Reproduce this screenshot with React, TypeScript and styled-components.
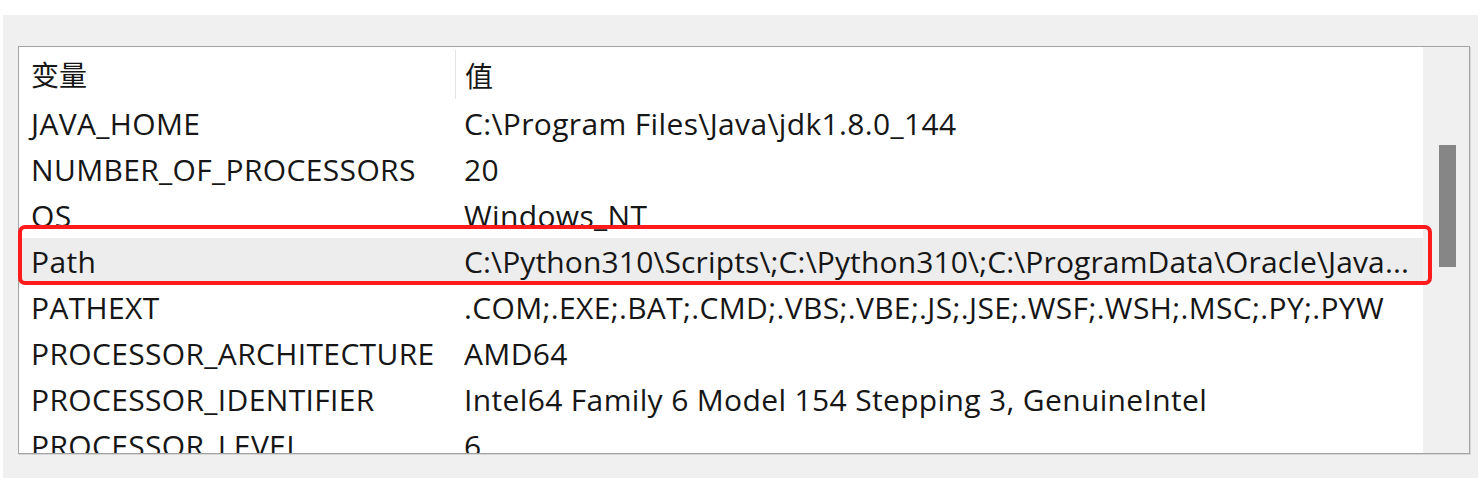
import React from "react";
import styled, { createGlobalStyle } from "styled-components";

const Global = createGlobalStyle`
  html, body { margin: 0; padding: 0; background: #ffffff; }
  body { font-family: "Open Sans", "Noto Sans CJK SC", sans-serif; }
`;

const Page = styled.div`
  width: 1480px;
  height: 482px;
  padding: 15px 2px 4px 3px;
  box-sizing: border-box;
  background: #ffffff;
`;

const Panel = styled.div`
  position: relative;
  height: 100%;
  background: #f0f0f0;
  padding: 31px 8px 0 15px;
  box-sizing: border-box;
`;

const ListBox = styled.div`
  position: relative;
  display: flex;
  width: 1452px;
  height: 408px;
  box-sizing: border-box;
  border: 1px solid #a3a3a3;
  box-shadow: 1px 1px 0 #d6d6d6;
  background: #ffffff;
  overflow: hidden;
`;

const Content = styled.div`
  flex: 1;
  min-width: 0;
  overflow: hidden;
`;

const Row = styled.div<{ $selected?: boolean; $header?: boolean }>`
  display: grid;
  grid-template-columns: 436px 1fr;
  height: ${(p) => (p.$header ? 53 : 46)}px;
  align-items: center;
  background: ${(p) => (p.$selected ? "#ededed" : "transparent")};
  font-size: 30px;
  letter-spacing: 0.35px;
  color: #161616;
  white-space: nowrap;
`;

const Cell = styled.div<{ $first?: boolean; $header?: boolean }>`
  padding-left: ${(p) => (p.$first ? 12 : 9)}px;
  overflow: hidden;
  height: 100%;
  display: flex;
  align-items: center;
  ${(p) =>
    p.$header && !p.$first
      ? "border-left: 1px solid #e3e3e3; margin-top: 2px; height: calc(100% - 4px);"
      : ""}
  ${(p) =>
    p.$header
      ? "font-family: 'Noto Sans CJK SC', sans-serif; font-size: 28px; letter-spacing: 0;"
      : ""}
`;

const Value = styled.span<{ $tight?: boolean }>`
  overflow: hidden;
  display: block;
  letter-spacing: ${(p) => (p.$tight ? "0.13px" : "inherit")};
`;

const ScrollTrack = styled.div`
  width: 46px;
  background: #f0f0f0;
  display: flex;
  justify-content: center;
  padding-top: 98px;
  box-sizing: border-box;
`;

const Thumb = styled.div`
  width: 17px;
  height: 122px;
  background: #868686;
  margin-left: 2px;
`;

const Highlight = styled.div`
  position: absolute;
  left: 15px;
  top: 210px;
  width: 1414px;
  height: 60px;
  border: 4px solid #ff1b1b;
  border-radius: 7px;
  box-sizing: border-box;
  pointer-events: none;
`;

const rows: [string, string][] = [
  ["JAVA_HOME", "C:\\Program Files\\Java\\jdk1.8.0_144"],
  ["NUMBER_OF_PROCESSORS", "20"],
  ["OS", "Windows_NT"],
  ["Path", "C:\\Python310\\Scripts\\;C:\\Python310\\;C:\\ProgramData\\Oracle\\Java..."],
  ["PATHEXT", ".COM;.EXE;.BAT;.CMD;.VBS;.VBE;.JS;.JSE;.WSF;.WSH;.MSC;.PY;.PYW"],
  ["PROCESSOR_ARCHITECTURE", "AMD64"],
  ["PROCESSOR_IDENTIFIER", "Intel64 Family 6 Model 154 Stepping 3, GenuineIntel"],
  ["PROCESSOR_LEVEL", "6"],
];

export default function App() {
  return (
    <>
      <Global />
      <Page>
        <Panel>
          <ListBox>
            <Content>
              <Row $header>
                <Cell $first $header>变量</Cell>
                <Cell $header>值</Cell>
              </Row>
              {rows.map(([k, v]) => (
                <Row key={k} $selected={k === "Path"}>
                  <Cell $first>{k}</Cell>
                  <Cell>
                    <Value $tight={k === "Path"}>{v}</Value>
                  </Cell>
                </Row>
              ))}
            </Content>
            <ScrollTrack>
              <Thumb />
            </ScrollTrack>
          </ListBox>
          <Highlight />
        </Panel>
      </Page>
    </>
  );
}
